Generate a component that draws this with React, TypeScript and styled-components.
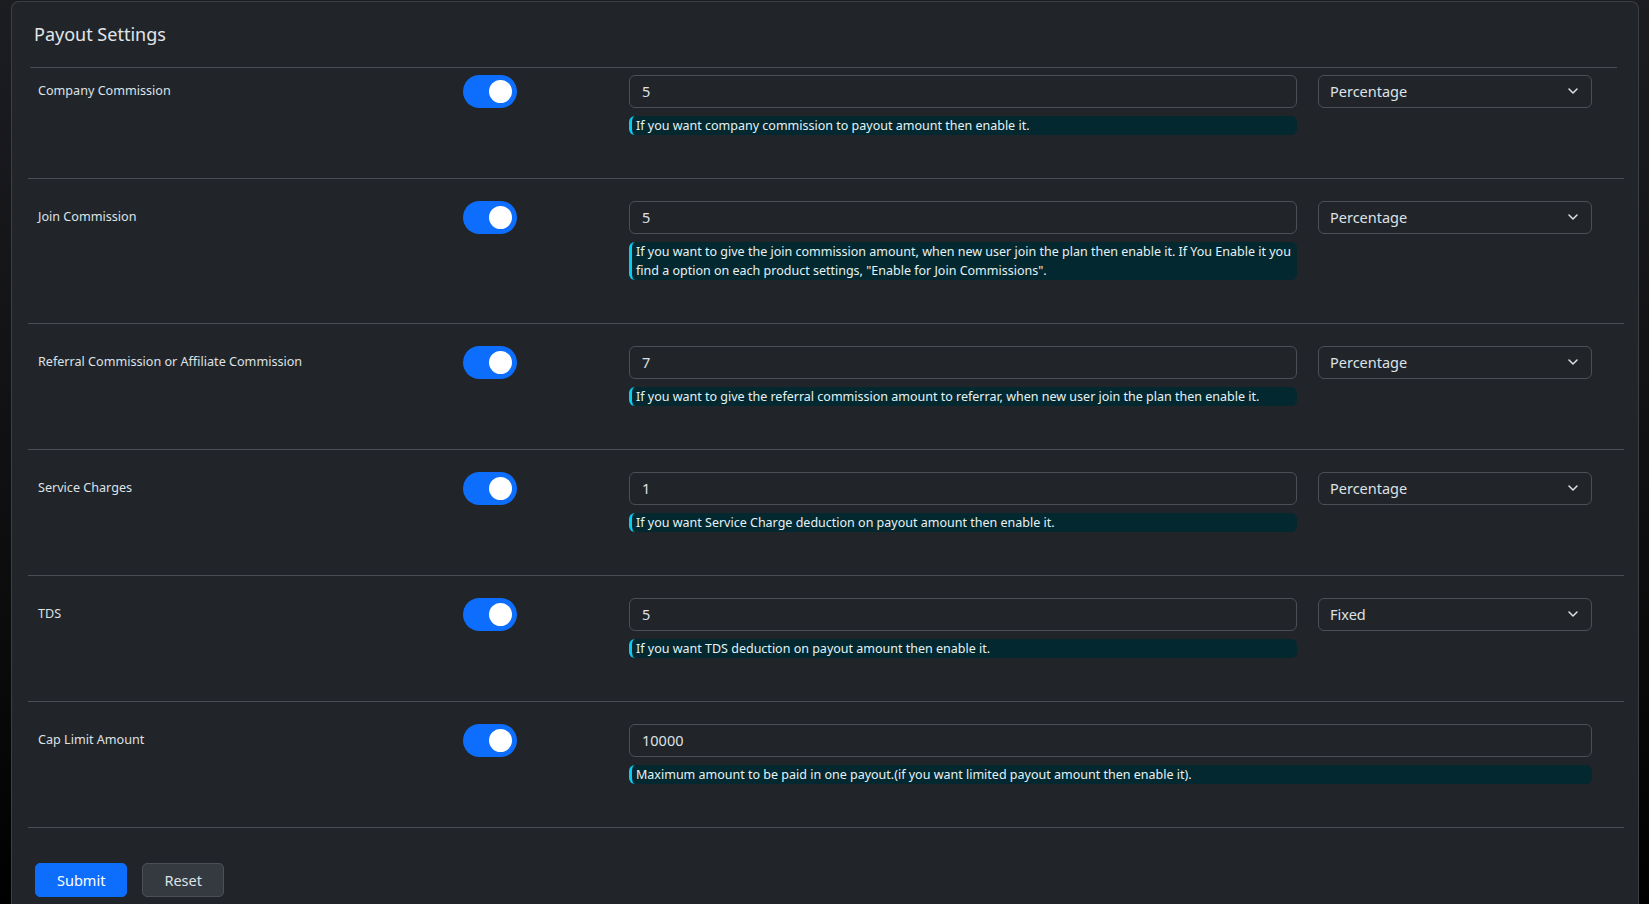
import React from "react";
import styled, { createGlobalStyle } from "styled-components";

const GlobalStyle = createGlobalStyle`
  html, body {
    margin: 0;
    padding: 0;
    height: 100%;
    overflow: hidden;
  }
  body {
    background: linear-gradient(180deg, #1c1d21 0%, #0b0b0c 70%, #000 100%);
    font-family: "Noto Sans", "Open Sans", sans-serif;
    color: #dee2e6;
  }
  * {
    box-sizing: border-box;
  }
`;

const Page = styled.div`
  padding: 1px 10px 0 11px;
`;

const Card = styled.div`
  width: 1628px;
  background: #212529;
  border: 1px solid #3b3f45;
  border-bottom: none;
  border-radius: 8px 8px 0 0;
  padding-bottom: 40px;
`;

const CardHeader = styled.div`
  margin: 0 21px 0 18px;
  padding: 19px 0 20px 4px;
  border-bottom: 1px solid #4a4e54;
`;

const Title = styled.h5`
  margin: 0;
  font-size: 18px;
  font-weight: 400;
  line-height: 26px;
  color: #e3e6e9;
`;

const Body = styled.div`
  margin: 0 14px 0 16px;
`;

const SettingRow = styled.div<{ $first?: boolean }>`
  display: grid;
  grid-template-columns: 425px 166px 1fr 295px;
  align-items: start;
  padding: ${(p) => (p.$first ? "7px" : "22px")} 32px 43px 10px;
  border-bottom: 1px solid #4a4e54;
`;

const Label = styled.div`
  font-size: 12.6px;
  line-height: 32px;
  color: #dee2e6;
`;

const SwitchTrack = styled.div<{ $on: boolean }>`
  width: 54px;
  height: 33px;
  border-radius: 17px;
  background: ${(p) => (p.$on ? "#0d6efd" : "#343a40")};
  display: flex;
  align-items: center;
  justify-content: ${(p) => (p.$on ? "flex-end" : "flex-start")};
  padding: 0 5px;
`;

const SwitchKnob = styled.div`
  width: 23px;
  height: 23px;
  border-radius: 50%;
  background: #fff;
`;

const Field = styled.div<{ $wide?: boolean }>`
  grid-column: ${(p) => (p.$wide ? "3 / 5" : "3 / 4")};
  display: flex;
  flex-direction: column;
  gap: 8px;
`;

const TextInput = styled.input`
  width: 100%;
  height: 33px;
  background: #212529;
  border: 1px solid #4b5057;
  border-radius: 6px;
  padding: 0 12px 1px;
  font-family: "Noto Sans", "Open Sans", sans-serif;
  font-size: 14.5px;
  color: #dee2e6;
  outline: none;
`;

const Help = styled.div`
  background: #032830;
  border-left: 3px solid #0dcaf0;
  border-radius: 6px;
  padding: 0 0 0 4px;
  font-size: 12.5px;
  line-height: 19px;
  color: #e6f2f5;
`;

const SelectBox = styled.div`
  margin-left: 21px;
  height: 33px;
  border: 1px solid #4b5057;
  border-radius: 6px;
  padding: 0 13px 1px 11px;
  display: flex;
  align-items: center;
  justify-content: space-between;
  font-size: 14.5px;
  color: #dee2e6;
`;

const Actions = styled.div`
  display: flex;
  gap: 15px;
  padding: 35px 0 0 7px;
`;

const Button = styled.button<{ $primary?: boolean }>`
  height: 34px;
  padding: 0 21px;
  border-radius: 5px;
  font-family: "Noto Sans", "Open Sans", sans-serif;
  font-size: 14.5px;
  cursor: pointer;
  color: ${(p) => (p.$primary ? "#fff" : "#dee2e6")};
  background: ${(p) => (p.$primary ? "#0d6efd" : "#343a40")};
  border: 1px solid ${(p) => (p.$primary ? "#0d6efd" : "#4b5057")};
`;

const Chevron = () => (
  <svg width="10" height="6" viewBox="0 0 10 6" fill="none">
    <polyline
      points="1,1 5,5 9,1"
      stroke="#dee2e6"
      strokeWidth="1.5"
      strokeLinecap="round"
      strokeLinejoin="round"
    />
  </svg>
);

type Setting = {
  label: string;
  value: string;
  help: string;
  type?: string;
};

const settings: Setting[] = [
  {
    label: "Company Commission",
    value: "5",
    type: "Percentage",
    help: "If you want company commission to payout amount then enable it.",
  },
  {
    label: "Join Commission",
    value: "5",
    type: "Percentage",
    help: 'If you want to give the join commission amount, when new user join the plan then enable it. If You Enable it you find a option on each product settings, "Enable for Join Commissions".',
  },
  {
    label: "Referral Commission or Affiliate Commission",
    value: "7",
    type: "Percentage",
    help: "If you want to give the referral commission amount to referrar, when new user join the plan then enable it.",
  },
  {
    label: "Service Charges",
    value: "1",
    type: "Percentage",
    help: "If you want Service Charge deduction on payout amount then enable it.",
  },
  {
    label: "TDS",
    value: "5",
    type: "Fixed",
    help: "If you want TDS deduction on payout amount then enable it.",
  },
  {
    label: "Cap Limit Amount",
    value: "10000",
    help: "Maximum amount to be paid in one payout.(if you want limited payout amount then enable it).",
  },
];

const App = () => {
  return (
    <Page>
      <GlobalStyle />
      <Card>
        <CardHeader>
          <Title>Payout Settings</Title>
        </CardHeader>
        <Body>
          {settings.map((s, i) => (
            <SettingRow key={s.label} $first={i === 0}>
              <Label>{s.label}</Label>
              <SwitchTrack $on>
                <SwitchKnob />
              </SwitchTrack>
              <Field $wide={!s.type}>
                <TextInput defaultValue={s.value} />
                <Help>{s.help}</Help>
              </Field>
              {s.type && (
                <SelectBox>
                  <span>{s.type}</span>
                  <Chevron />
                </SelectBox>
              )}
            </SettingRow>
          ))}
          <Actions>
            <Button $primary>Submit</Button>
            <Button>Reset</Button>
          </Actions>
        </Body>
      </Card>
    </Page>
  );
};

export default App;
